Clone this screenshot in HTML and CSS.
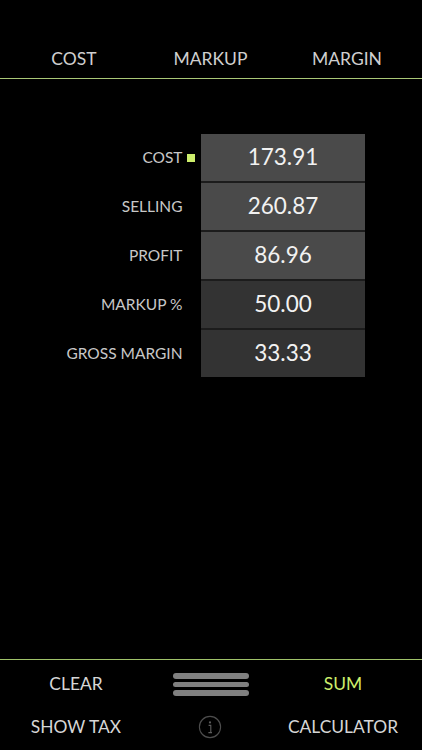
FILE: index.html
```html
<!DOCTYPE html>
<html lang="en">
<head>
<meta charset="utf-8">
<title>Margin Calculator</title>
<link rel="stylesheet" href="styles.css">
</head>
<body>
<div class="app">
  <nav class="tabs">
    <span>COST</span>
    <span>MARKUP</span>
    <span>MARGIN</span>
  </nav>
  <main class="table">
    <div class="row light">
      <div class="label">COST<i class="marker"></i></div>
      <div class="value">173.91</div>
    </div>
    <div class="row light">
      <div class="label">SELLING</div>
      <div class="value">260.87</div>
    </div>
    <div class="row light">
      <div class="label">PROFIT</div>
      <div class="value">86.96</div>
    </div>
    <div class="row dark">
      <div class="label">MARKUP %</div>
      <div class="value">50.00</div>
    </div>
    <div class="row dark">
      <div class="label">GROSS MARGIN</div>
      <div class="value">33.33</div>
    </div>
  </main>
  <footer class="footer">
    <div class="cell">CLEAR</div>
    <div class="cell bars"><b></b><b></b><b></b></div>
    <div class="cell accent">SUM</div>
    <div class="cell">SHOW TAX</div>
    <div class="cell info-cell">
      <svg class="info" width="24" height="24" viewBox="0 0 24 24" aria-label="info">
        <circle cx="12" cy="12" r="10.6" fill="none" stroke="#4d4d4d" stroke-width="1.1"/>
        <circle cx="12" cy="7.4" r="1.1" fill="#5c5c5c"/>
        <path d="M10.6 10.4h2.2v7.2M10.4 17.6h3.6" fill="none" stroke="#5c5c5c" stroke-width="1.1"/>
      </svg>
    </div>
    <div class="cell">CALCULATOR</div>
  </footer>
</div>
</body>
</html>
```
FILE: styles.css
```css
* { box-sizing: border-box; }
html, body { margin: 0; height: 100%; background: #000; }
body { font-family: "Lato", "Open Sans", sans-serif; color: #d6d6d6; overflow: hidden; }
.app { height: 750px; display: flex; flex-direction: column; }
.tabs {
  height: 79px;
  padding-top: 38px;
  display: grid;
  grid-template-columns: 148px 125px 148px;
  align-items: center;
  justify-items: center;
  font-size: 17.5px;
  color: #cfcfcf;
  border-bottom: 1px solid #a9c777;
  white-space: nowrap;
}
.table { flex: 1; padding-top: 55px; display: flex; flex-direction: column; }
.row { display: flex; height: 49px; }
.label {
  width: 201px;
  height: 45px;
  padding-right: 18.5px;
  display: flex;
  justify-content: flex-end;
  align-items: center;
  font-size: 15.5px;
  color: #c8c8c8;
  position: relative;
}
.marker {
  position: absolute;
  left: 187px;
  top: 20px;
  width: 7.5px;
  height: 8px;
  background: #cdee6c;
}
.value {
  width: 164px;
  height: 49px;
  padding-bottom: 3px;
  border-bottom: 2px solid #1c1c1c;
  display: flex;
  justify-content: center;
  align-items: center;
  font-size: 22.5px;
  color: #f2f2f2;
}
.light .value { background: #4a4a4a; }
.dark .value { background: #333; }
.row:last-child .value { border-bottom-color: #000; }
.footer {
  height: 91px;
  border-top: 1px solid #9fc26a;
  display: grid;
  grid-template-columns: 152px 118px 146px;
  grid-template-rows: 46px 41px;
  font-size: 17.4px;
  color: #d6d6d6;
  white-space: nowrap;
}
.cell { display: flex; justify-content: center; align-items: center; }
.accent { color: #cdee6c; }
.bars { flex-direction: column; gap: 3px; padding-top: 3px; }
.bars b { width: 76px; height: 5.5px; border-radius: 3px; background: #808080; }
.info-cell { padding-right: 2px; }
```
